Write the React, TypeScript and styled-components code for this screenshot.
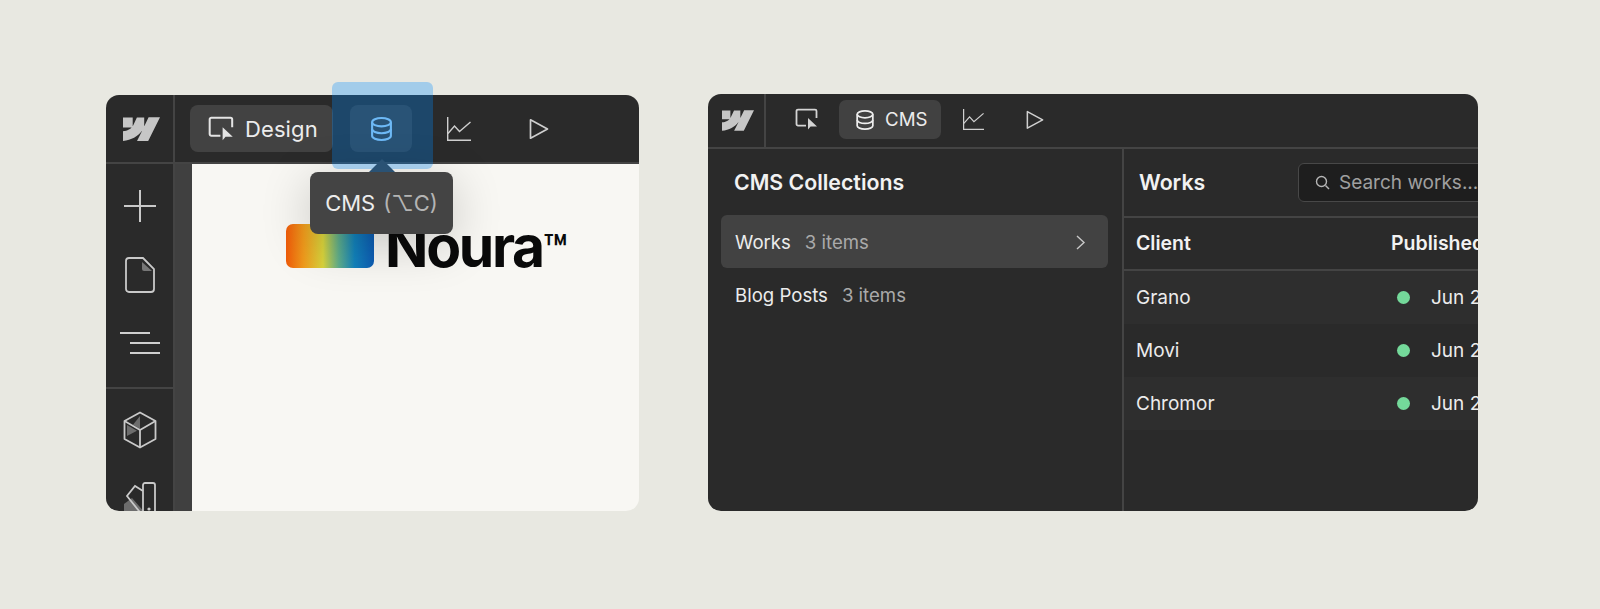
import React from 'react';
import styled, { createGlobalStyle } from 'styled-components';

const GlobalStyle = createGlobalStyle`
  html, body {
    margin: 0;
    padding: 0;
    background: #e8e8e1;
    font-family: Inter, "Liberation Sans", sans-serif;
    -webkit-font-smoothing: antialiased;
  }
`;

const WebflowLogo: React.FC<{ width: number }> = ({ width }) => (
  <svg width={width} viewBox="0 0 37 24" fill="#c6c6c6" style={{ display: 'block' }}>
    <path d="M37 0.2 25.2 24H14l5-9.9h-.2C14.7 19.6 8.600 23 0 24v-9.700c0 0 5.400-.3 8.600-3.700H0V.6h9.700v8.500l.2 0L13.900.6h7.300v8.500l.2 0L25.600.2Z" />
  </svg>
);

const CursorIcon: React.FC<{ size: number; color?: string }> = ({ size, color = '#e4e4e4' }) => (
  <svg width={size} height={size * 0.92} viewBox="0 0 24 22" fill="none" style={{ display: 'block' }}>
    <path d="M11 17.500H3a1.500 1.500 0 0 1-1.500-1.500V3A1.500 1.500 0 0 1 3 1.500h17A1.500 1.500 0 0 1 21.500 3v7" stroke={color} strokeWidth="1.800" />
    <path d="M13 10v11.500l2.600-3h6.400z" fill={color} />
  </svg>
);

const DatabaseIcon: React.FC<{ width: number; height: number; color: string }> = ({ width, height, color }) => (
  <svg width={width} height={height} viewBox="2 0.500 20 23" fill="none" stroke={color} strokeWidth="2" style={{ display: 'block' }}>
    <ellipse cx="12" cy="5.500" rx="9" ry="4" />
    <path d="M3 5.500v13c0 2.200 4 4 9 4s9-1.800 9-4v-13" />
    <path d="M3 12c0 2.200 4 4 9 4s9-1.800 9-4" />
  </svg>
);

const ChartIcon: React.FC<{ size: number }> = ({ size }) => (
  <svg width={size} height={size} viewBox="0 0 24 24" fill="none" stroke="#cfcfcf" strokeWidth="1.400" style={{ display: 'block' }}>
    <path d="M.700 0v23.300H24" />
    <path d="M1 16.500 7.500 9l5 5.500L23.500 5" />
  </svg>
);

const PlayIcon: React.FC<{ size: number }> = ({ size }) => (
  <svg width={size} height={size * 1.100} viewBox="0 0 20 22" fill="none" stroke="#cfcfcf" strokeWidth="1.700" style={{ display: 'block' }}>
    <path d="M1.500 1.800v18.400L18.500 11z" strokeLinejoin="round" />
  </svg>
);

const PlusIcon = () => (
  <svg width="32" height="32" viewBox="0 0 32 32" stroke="#c9c9c9" strokeWidth="2" style={{ display: 'block' }}>
    <path d="M16 0v32M0 16h32" />
  </svg>
);

const FileIcon = () => (
  <svg width="30" height="36" viewBox="0 0 30 36" fill="none" style={{ display: 'block' }}>
    <path d="M17 5v7a2 2 0 0 0 2 2h8z" fill="#777" />
    <path d="M4 1h14l11 11v20a3 3 0 0 1-3 3H4a3 3 0 0 1-3-3V4a3 3 0 0 1 3-3z" stroke="#c9c9c9" strokeWidth="1.800" />
  </svg>
);

const LinesIcon = () => (
  <svg width="40" height="22" viewBox="0 0 40 22" stroke="#cfcfcf" strokeWidth="1.800" style={{ display: 'block' }}>
    <path d="M0 1h30M10 11h30M10 21h30" />
  </svg>
);

const BoxIcon = () => (
  <svg width="34" height="38" viewBox="0 0 34 38" fill="none" style={{ display: 'block' }}>
    <path d="M17 5v13l-7-4.200z" fill="#6d6d6d" />
    <path d="M4 14l10 5.800L4 25z" fill="#6d6d6d" />
    <path d="M17 1.500 32.500 10v18L17 36.500 1.500 28V10z" stroke="#c9c9c9" strokeWidth="1.800" strokeLinejoin="round" />
    <path d="M1.500 10 17 19l15.500-9M17 19v17.500" stroke="#c9c9c9" strokeWidth="1.800" />
  </svg>
);

const SwatchIcon = () => (
  <svg width="32" height="32" viewBox="0 0 32 32" fill="none" style={{ display: 'block' }}>
    <path d="M0 22 8 16 22 32H0z" fill="#6d6d6d" />
    <path d="M19 3a2 2 0 0 1 2-2h8a2 2 0 0 1 2 2v30H19z" stroke="#c9c9c9" strokeWidth="1.800" />
    <path d="M19 9 11 4 3 14l16 20" stroke="#c9c9c9" strokeWidth="1.800" />
    <circle cx="25" cy="27" r="1.600" fill="#c9c9c9" />
  </svg>
);

const SearchIcon = () => (
  <svg width="15" height="15" viewBox="0 0 15 15" fill="none" stroke="#b5b5b5" strokeWidth="1.400" style={{ display: 'block' }}>
    <circle cx="6.500" cy="6.500" r="5" />
    <path d="m10.500 10.500 3.500 3.500" />
  </svg>
);

const ChevronIcon = () => (
  <svg width="11" height="15" viewBox="0 0 11 15" fill="none" stroke="#c8c8c8" strokeWidth="1.400" style={{ display: 'block' }}>
    <path d="m2 1 7 6.500L2 14" />
  </svg>
);

const rows = ['Grano', 'Movi', 'Chromor'];

const App: React.FC = () => (
  <Page>
    <GlobalStyle />
    <EditorCard>
      <EditorTop>
        <EditorLogoCell>
          <WebflowLogo width={37} />
        </EditorLogoCell>
        <EditorTabs>
          <DesignTab>
            <CursorIcon size={27} />
            Design
          </DesignTab>
          <CmsTab>
            <DatabaseIcon width={21} height={24} color="#9dcdf3" />
          </CmsTab>
          <ChartSlot>
            <ChartIcon size={24} />
          </ChartSlot>
          <PlaySlot>
            <PlayIcon size={20} />
          </PlaySlot>
        </EditorTabs>
      </EditorTop>
      <EditorBody>
        <Rail>
          <RailGroup>
            <PlusIcon />
            <FileIcon />
            <LinesIcon />
          </RailGroup>
          <RailLower>
            <BoxIcon />
            <SwatchIcon />
          </RailLower>
        </Rail>
        <Strip />
        <Canvas>
          <Brand>
            <BrandMark />
            <BrandName>
              Noura<BrandTm>™</BrandTm>
            </BrandName>
          </Brand>
        </Canvas>
      </EditorBody>
      <Highlight />
      <Tooltip>
        CMS <TooltipKey>(⌥C)</TooltipKey>
      </Tooltip>
    </EditorCard>

    <CmsCard>
      <CmsTop>
        <CmsLogoCell>
          <WebflowLogo width={32} />
        </CmsLogoCell>
        <CmsTabs>
          <CursorIcon size={24} color="#d4d4d4" />
          <CmsActive>
            <DatabaseIcon width={18} height={20} color="#eeeeee" />
            CMS
          </CmsActive>
          <ChartIcon size={21} />
          <PlayIcon size={18} />
        </CmsTabs>
      </CmsTop>
      <CmsBody>
        <Collections>
          <PanelTitle>CMS Collections</PanelTitle>
          <CollectionRow $active>
            <CollectionName>Works</CollectionName>
            <CollectionCount>3 items</CollectionCount>
            <ChevronSlot>
              <ChevronIcon />
            </ChevronSlot>
          </CollectionRow>
          <CollectionRow>
            <CollectionName>Blog Posts</CollectionName>
            <CollectionCount>3 items</CollectionCount>
          </CollectionRow>
        </Collections>
        <Works>
          <WorksHeader>
            <WorksTitle>Works</WorksTitle>
            <Search>
              <SearchIcon />
              <SearchText>Search works...</SearchText>
            </Search>
          </WorksHeader>
          <TableHead>
            <ClientCell>Client</ClientCell>
            <PublishedHead>Published</PublishedHead>
          </TableHead>
          {rows.map((name, i) => (
            <TableRow key={name} $odd={i % 2 === 0}>
              <ClientName>{name}</ClientName>
              <Dot />
              <DateText>Jun 20, 2024</DateText>
            </TableRow>
          ))}
        </Works>
      </CmsBody>
    </CmsCard>
  </Page>
);

const Page = styled.div`
  width: 1600px;
  height: 609px;
  box-sizing: border-box;
  padding: 95px 0 0 106px;
  display: flex;
  align-items: flex-start;
  gap: 69px;
  overflow: hidden;
  background: #e8e8e1;
`;

const EditorCard = styled.div`
  width: 533px;
  height: 416px;
  display: flex;
  flex-direction: column;
  position: relative;
`;

const EditorTop = styled.div`
  height: 67px;
  flex: none;
  display: flex;
  background: #2a2a2a;
  border-radius: 13px 13px 0 0;
  border-bottom: 2px solid #444;
`;

const EditorLogoCell = styled.div`
  width: 69px;
  flex: none;
  box-sizing: border-box;
  padding-left: 17px;
  display: flex;
  align-items: center;
  border-right: 2px solid #444;
`;

const EditorTabs = styled.div`
  display: flex;
  align-items: center;
  padding-left: 15px;
`;

const DesignTab = styled.div`
  width: 143px;
  height: 47px;
  box-sizing: border-box;
  padding-left: 18px;
  display: flex;
  align-items: center;
  gap: 10px;
  border-radius: 8px;
  background: #424242;
  color: #ececec;
  font-size: 22px;
  letter-spacing: 0.1px;
`;

const CmsTab = styled.div`
  width: 62px;
  height: 47px;
  margin-left: 17px;
  display: flex;
  align-items: center;
  justify-content: center;
  border-radius: 8px;
  background: #3c3c3c;
`;

const ChartSlot = styled.div`
  margin-left: 35px;
`;

const PlaySlot = styled.div`
  margin-left: 58px;
`;

const Highlight = styled.div`
  position: absolute;
  left: 226px;
  top: -13px;
  width: 101px;
  height: 87px;
  border-radius: 6px;
  background: rgba(0, 140, 255, 0.3);
  z-index: 2;
`;

const Tooltip = styled.div`
  position: absolute;
  left: 204px;
  top: 77px;
  width: 143px;
  height: 62px;
  box-sizing: border-box;
  display: flex;
  align-items: center;
  justify-content: center;
  gap: 8px;
  border-radius: 8px;
  background: #444;
  color: #ececec;
  font-size: 22px;
  box-shadow: 0 10px 50px rgba(0, 0, 0, 0.2);
  z-index: 3;

  &::before {
    content: '';
    position: absolute;
    left: 50%;
    top: -13px;
    margin-left: -13px;
    border-left: 13px solid transparent;
    border-right: 13px solid transparent;
    border-bottom: 13px solid #2a5274;
  }
`;

const TooltipKey = styled.span`
  color: #b4b4b4;
`;

const EditorBody = styled.div`
  flex: 1;
  min-height: 0;
  display: flex;
  overflow: hidden;
  border-radius: 0 0 13px 13px;
`;

const Rail = styled.div`
  width: 67px;
  flex: none;
  background: #2a2a2a;
  border-right: 2px solid #444;
  display: flex;
  flex-direction: column;
`;

const RailGroup = styled.div`
  height: 225px;
  flex: none;
  box-sizing: border-box;
  padding-top: 26px;
  display: flex;
  flex-direction: column;
  align-items: center;
  gap: 35px;
  border-bottom: 2px solid #444;

  svg:last-child {
    margin-top: 4px;
  }
`;

const RailLower = styled.div`
  padding-top: 22px;
  display: flex;
  flex-direction: column;
  align-items: center;
  gap: 33px;
`;

const Strip = styled.div`
  width: 17px;
  flex: none;
  background: #404040;
`;

const Canvas = styled.div`
  flex: 1;
  background: #f8f7f3;
  padding: 53px 0 0 94px;
`;

const Brand = styled.div`
  display: flex;
  align-items: center;
  gap: 11px;
`;

const BrandMark = styled.div`
  width: 88px;
  height: 44px;
  border-radius: 7px;
  background: linear-gradient(90deg, #ee5a09 0%, #f09a1c 20%, #d9d43c 42%, #5fae8c 60%, #1283bd 78%, #0d5cb4 100%);
`;

const BrandName = styled.div`
  position: relative;
  top: 1px;
  color: #0a0a0a;
  font-size: 57px;
  line-height: 57px;
  font-weight: 700;
  letter-spacing: -2.300px;
`;

const BrandTm = styled.span`
  font-size: 39px;
  font-weight: 600;
  vertical-align: 4px;
  line-height: 0;
  letter-spacing: -1px;
`;

const CmsCard = styled.div`
  width: 770px;
  height: 417px;
  margin-top: -1px;
  border-radius: 13px;
  overflow: hidden;
  background: #2a2a2a;
  display: flex;
  flex-direction: column;
`;

const CmsTop = styled.div`
  height: 53px;
  flex: none;
  display: flex;
  border-bottom: 2px solid #444;
`;

const CmsLogoCell = styled.div`
  width: 58px;
  flex: none;
  box-sizing: border-box;
  padding-left: 14px;
  display: flex;
  align-items: center;
  border-right: 2px solid #444;
`;

const CmsTabs = styled.div`
  display: flex;
  align-items: center;
  gap: 20px;
  padding: 0 0 2px 29px;

  svg:nth-child(3) {
    margin-left: 2px;
  }

  svg:nth-child(4) {
    margin-left: 22px;
  }
`;

const CmsActive = styled.div`
  width: 102px;
  height: 39px;
  box-sizing: border-box;
  padding-left: 17px;
  display: flex;
  align-items: center;
  gap: 11px;
  border-radius: 7px;
  background: #414141;
  color: #ececec;
  font-size: 18.700px;
`;

const CmsBody = styled.div`
  flex: 1;
  min-height: 0;
  display: flex;
`;

const Collections = styled.div`
  width: 416px;
  flex: none;
  box-sizing: border-box;
  padding: 0 14px 0 13px;
  border-right: 2px solid #444;
`;

const PanelTitle = styled.div`
  height: 66px;
  padding-left: 13px;
  display: flex;
  align-items: center;
  color: #f2f2f2;
  font-size: 21.300px;
  font-weight: 600;
`;

const CollectionRow = styled.div<{ $active?: boolean }>`
  height: 53px;
  box-sizing: border-box;
  padding: 1px 22px 0 14px;
  display: flex;
  align-items: center;
  gap: 14px;
  border-radius: 6px;
  background: ${(p) => (p.$active ? '#424242' : 'transparent')};
  font-size: 18.600px;
`;

const CollectionName = styled.span`
  color: #ececec;
`;

const CollectionCount = styled.span`
  color: #aaa;
`;

const ChevronSlot = styled.span`
  margin-left: auto;
`;

const Works = styled.div`
  flex: 1;
  min-width: 0;
  overflow: hidden;
`;

const WorksHeader = styled.div`
  height: 69px;
  box-sizing: border-box;
  padding-left: 15px;
  display: flex;
  align-items: center;
  border-bottom: 2px solid #444;
`;

const WorksTitle = styled.div`
  width: 159px;
  flex: none;
  margin-bottom: 2px;
  color: #f2f2f2;
  font-size: 21.300px;
  font-weight: 600;
`;

const Search = styled.div`
  width: 240px;
  height: 39px;
  flex: none;
  box-sizing: border-box;
  padding-left: 16px;
  display: flex;
  align-items: center;
  gap: 9px;
  border: 1px solid #484848;
  border-radius: 6px;
  background: #1e1e1e;
`;

const SearchText = styled.span`
  color: #a0a0a0;
  font-size: 19px;
  white-space: nowrap;
`;

const TableHead = styled.div`
  height: 53px;
  box-sizing: border-box;
  padding: 0 0 2px 12px;
  display: flex;
  align-items: center;
  border-bottom: 2px solid #444;
  color: #f2f2f2;
  font-size: 19.500px;
  font-weight: 600;
`;

const ClientCell = styled.div`
  width: 255px;
  flex: none;
`;

const PublishedHead = styled.div`
  white-space: nowrap;
`;

const TableRow = styled.div<{ $odd: boolean }>`
  height: 53px;
  box-sizing: border-box;
  padding-left: 12px;
  display: flex;
  align-items: center;
  background: ${(p) => (p.$odd ? '#2e2e2e' : '#2a2a2a')};
  color: #ececec;
  font-size: 19px;
`;

const ClientName = styled.div`
  width: 261px;
  flex: none;
`;

const Dot = styled.span`
  width: 13px;
  height: 13px;
  flex: none;
  border-radius: 50%;
  background: #74d99a;
`;

const DateText = styled.span`
  margin-left: 21px;
  white-space: nowrap;
`;

export default App;
